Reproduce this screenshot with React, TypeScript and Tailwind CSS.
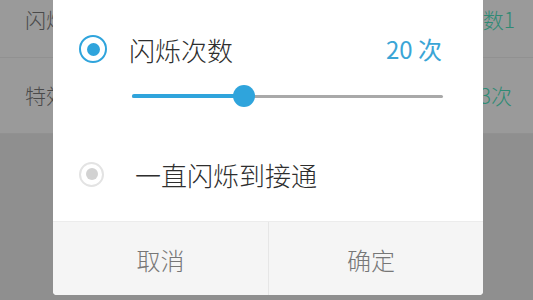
export default function App() {
  const progress = 0.36;
  return (
    <div
      className="relative h-[300px] w-[533px] overflow-hidden bg-[#8f8f8f] font-light"
      style={{ fontFamily: '"Noto Sans CJK SC", "Noto Sans", sans-serif' }}
    >
      {/* page behind the dialog, dimmed */}
      <div className="flex flex-col bg-[#9a9a9a]">
        <div className="flex h-[58px] items-start justify-between border-b border-[#919191] pl-[25px] pr-[18px] pt-[4px] text-[21px]">
          <span className="text-[#4a4a4a]">闪烁提醒</span>
          <span className="text-[#2f8a74]">闪烁次数1</span>
        </div>
        <div className="flex h-[76px] items-center justify-between border-b border-[#919191] pl-[25px] pr-[21px] text-[21px]">
          <span className="text-[#4a4a4a]">特效闪烁</span>
          <span className="text-[#2f8a74]">闪烁3次</span>
        </div>
      </div>

      {/* dialog */}
      <div className="absolute left-[53px] top-0 flex h-[295px] w-[430px] flex-col overflow-hidden rounded-b-[4px] bg-white">
        <div className="mt-[30px] flex h-[38px] items-center pl-[26px] pr-[41px]">
          <div className="flex h-[28px] w-[28px] items-center justify-center rounded-full border-[2.5px] border-[#2fa4dc]">
            <div className="h-[13px] w-[13px] rounded-full bg-[#2fa4dc]" />
          </div>
          <span className="ml-[22px] text-[26px] text-[#2e2e2e]">闪烁次数</span>
          <span className="ml-auto text-[24px] font-normal text-[#3aa5d6]">20 次</span>
        </div>

        <div className="relative ml-[79px] mr-[40px] mt-[17px] flex h-[22px] items-center">
          <div className="h-[3px] w-full rounded-full bg-[#a9a9a9]" />
          <div
            className="absolute left-0 h-[4px] rounded-full bg-[#2fa4dc]"
            style={{ width: `${progress * 100}%` }}
          />
          <div
            className="absolute h-[22px] w-[22px] -translate-x-1/2 rounded-full bg-[#2fa4dc]"
            style={{ left: `${progress * 100}%` }}
          />
        </div>

        <div className="mt-[48px] flex h-[38px] items-center pl-[26px]">
          <div className="flex h-[25px] w-[25px] items-center justify-center rounded-full border-[2.5px] border-[#e3e3e3]">
            <div className="h-[12px] w-[12px] rounded-full bg-[#d2d2d2]" />
          </div>
          <span className="ml-[31px] text-[26px] text-[#2e2e2e]">一直闪烁到接通</span>
        </div>

        <div className="mt-auto flex h-[74px] border-t border-[#ececec] bg-[#f5f5f5]">
          <button type="button" className="flex w-[215px] items-center justify-center pt-[3px] text-[24px] font-light text-[#777777]">
            取消
          </button>
          <div className="w-px bg-[#e6e6e6]" />
          <button type="button" className="flex flex-1 items-center justify-center pr-[10px] pt-[3px] text-[24px] font-light text-[#777777]">
            确定
          </button>
        </div>
      </div>
    </div>
  );
}
